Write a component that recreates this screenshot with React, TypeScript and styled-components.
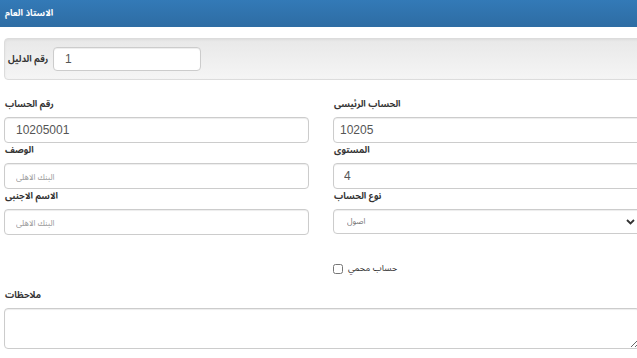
import React from 'react';
import styled, { createGlobalStyle } from 'styled-components';

const arabic = `"Liberation Sans", "Noto Sans Arabic", "Noto Naskh Arabic", "DejaVu Sans", sans-serif`;

const GlobalStyle = createGlobalStyle`
  html, body {
    margin: 0;
    padding: 0;
    background: #fff;
    overflow: hidden;
  }
  body {
    font-family: ${arabic};
    color: #333;
  }
  * { box-sizing: border-box; }
`;

const Page = styled.div`
  width: 648px;
`;

const Heading = styled.div`
  height: 27px;
  background: linear-gradient(to bottom, #337ab7 0%, #2e6da4 100%);
  border-bottom: 1px solid #2e6da4;
  color: #fff;
  font-size: 9px;
  font-weight: bold;
  padding: 0 5px;
  display: flex;
  align-items: center;
`;

const Body = styled.div`
  padding: 11px 0 0 4px;
`;

const Well = styled.div`
  height: 42px;
  display: flex;
  align-items: center;
  gap: 5px;
  padding: 0 3px;
  border: 1px solid #dcdcdc;
  border-radius: 4px;
  background: linear-gradient(to bottom, #e8e8e8 0%, #f5f5f5 100%);
  box-shadow: inset 0 1px 3px rgba(0, 0, 0, 0.05), 0 1px 0 rgba(255, 255, 255, 0.1);
`;

const InlineLabel = styled.label`
  font-size: 9px;
  font-weight: bold;
  width: 40px;
  white-space: nowrap;
`;

const Grid = styled.div`
  display: grid;
  grid-template-columns: 305px 311px;
  column-gap: 24px;
  margin-top: 17px;
`;

const Field = styled.div<{ $span?: boolean }>`
  display: flex;
  flex-direction: column;
  grid-column: ${p => (p.$span ? '1 / -1' : 'auto')};
`;

const Label = styled.label`
  font-size: 9px;
  font-weight: bold;
  line-height: 14px;
  margin-bottom: 6px;
  padding-left: 1px;
`;

const Input = styled.input<{ $pad?: number; $w?: number }>`
  height: 26px;
  width: ${p => (p.$w ? `${p.$w}px` : '100%')};
  border: 1px solid #ccc;
  border-radius: 4px;
  box-shadow: inset 0 1px 1px rgba(0, 0, 0, 0.075);
  padding: 0 0 0 ${p => p.$pad ?? 11}px;
  font-family: ${arabic};
  font-size: 12px;
  color: #555;
  background: #fff;
  outline: none;
  &::placeholder {
    color: #999;
    font-size: 8px;
  }
`;

const SelectWrap = styled.div`
  position: relative;
`;

const Select = styled.select`
  appearance: none;
  height: 25px;
  width: 100%;
  border: 1px solid #ccc;
  border-radius: 4px;
  box-shadow: inset 0 1px 1px rgba(0, 0, 0, 0.075);
  padding: 0 0 0 13px;
  font-family: ${arabic};
  font-size: 8px;
  color: #777;
  background: #fff;
  outline: none;
`;

const Chevron = styled.svg`
  position: absolute;
  left: 293px;
  top: 10px;
  pointer-events: none;
`;

const CheckRow = styled.div`
  grid-column: 2;
  display: flex;
  align-items: center;
  gap: 5px;
  margin-top: 28px;
  height: 11px;
`;

const Check = styled.input`
  margin: 0;
  width: 10px;
  height: 10px;
`;

const CheckLabel = styled.label`
  font-size: 9px;
`;

const Remarks = styled(Field)`
  margin-top: 14px;
`;

const TextArea = styled.textarea`
  height: 41px;
  width: 636px;
  border: 1px solid #ccc;
  border-radius: 4px;
  box-shadow: inset 0 1px 1px rgba(0, 0, 0, 0.075);
  resize: vertical;
  outline: none;
`;

export default function App() {
  return (
    <Page>
      <GlobalStyle />
      <Heading>الاستاذ العام</Heading>
      <Body>
        <Well>
          <InlineLabel>رقم الدليل</InlineLabel>
          <Input $w={148} $pad={11} defaultValue="1" style={{ height: 24 }} />
        </Well>
        <Grid>
          <Field>
            <Label>رقم الحساب</Label>
            <Input defaultValue="10205001" />
          </Field>
          <Field>
            <Label>الحساب الرئيسى</Label>
            <Input $pad={6} defaultValue="10205" />
          </Field>
          <Field>
            <Label>الوصف</Label>
            <Input placeholder="البنك الاهلى" />
          </Field>
          <Field>
            <Label>المستوى</Label>
            <Input $pad={10} defaultValue="4" />
          </Field>
          <Field>
            <Label>الاسم الاجنبى</Label>
            <Input placeholder="البنك الاهلى" />
          </Field>
          <Field>
            <Label>نوع الحساب</Label>
            <SelectWrap>
              <Select defaultValue="assets">
                <option value="assets">اصول</option>
              </Select>
              <Chevron width="9" height="6" viewBox="0 0 9 6">
                <path d="M1 1 L4.5 4.5 L8 1" fill="none" stroke="#333" strokeWidth="1.8" />
              </Chevron>
            </SelectWrap>
          </Field>
          <CheckRow>
            <Check type="checkbox" />
            <CheckLabel>حساب محمي</CheckLabel>
          </CheckRow>
          <Remarks $span>
            <Label>ملاحظات</Label>
            <TextArea />
          </Remarks>
        </Grid>
      </Body>
    </Page>
  );
}
